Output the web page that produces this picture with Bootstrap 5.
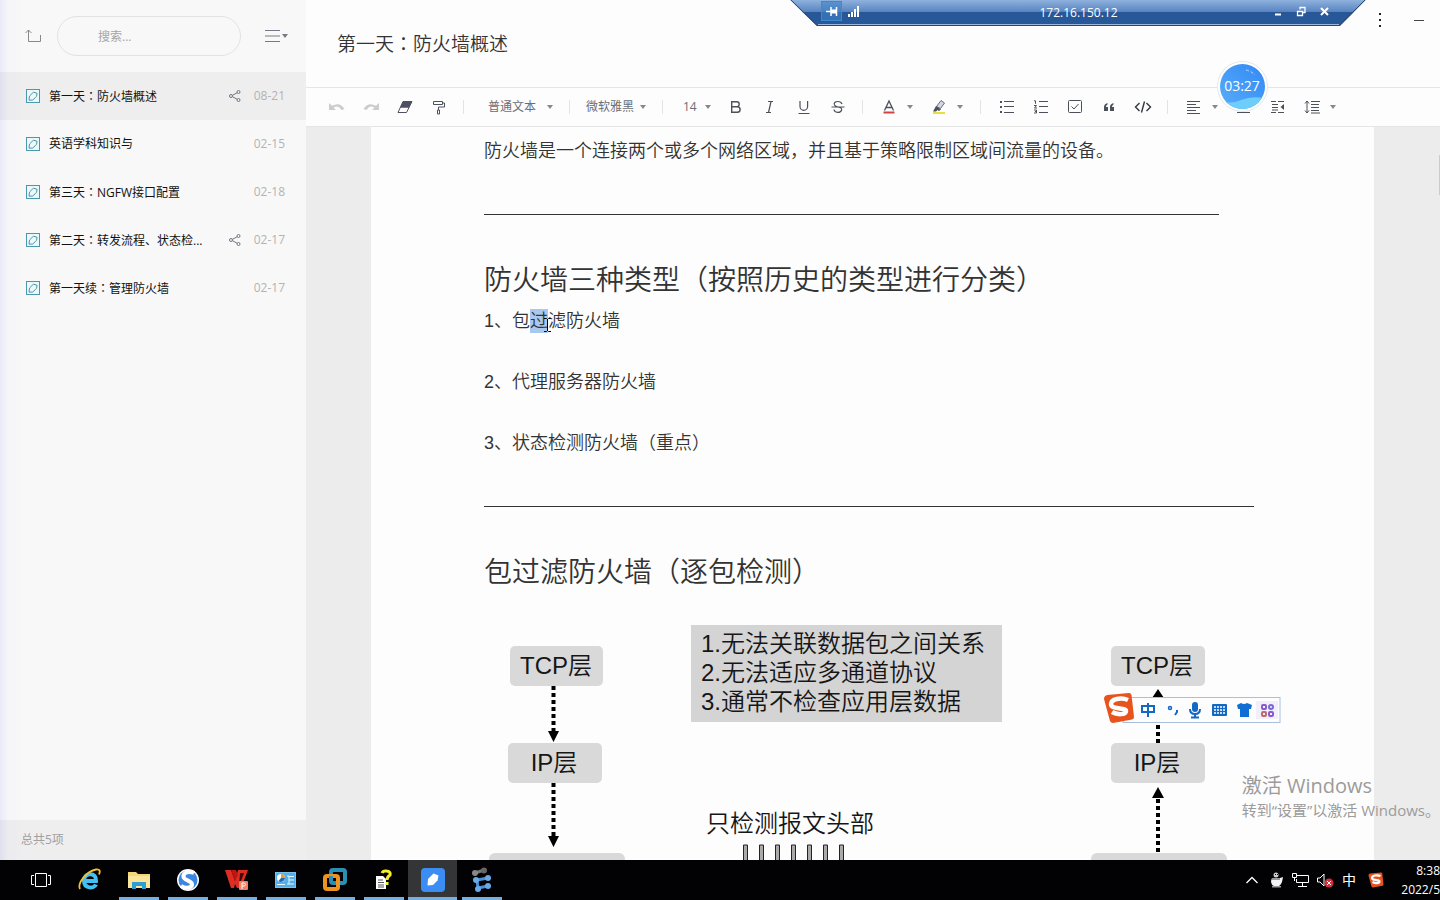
<!DOCTYPE html>
<html lang="zh-CN">
<head>
<meta charset="utf-8">
<meta name="viewport" content="width=device-width, initial-scale=1">
<title>第一天：防火墙概述</title>
<link href="https://cdn.jsdelivr.net/npm/bootstrap@5.3.0/dist/css/bootstrap.min.css" rel="stylesheet">
<style>
  body { font-family: "Open Sans", "Noto Sans CJK SC", sans-serif; font-size: 12px; color: #333; background: #fdfdfd; }
  button { padding: 0; border: 0; background: none; color: inherit; display: flex; align-items: center; justify-content: center; }
  svg { display: block; flex: none; }
  .mid-colon { font-family: "Noto Sans CJK TC", sans-serif; }

  /* note list */
  .notes { width: 306px; background: linear-gradient(90deg, #e9eaf7 0, #f5f5fa 8px, #f8f8f8 24px); }
  .notes-head { height: 72px; padding: 0 18px 0 25px; }
  .search-box { width: 184px; height: 40px; margin-left: 16px; padding: 0 40px; border: 1px solid #e2e2e2; border-radius: 20px; background: transparent; font-size: 12px; color: #999; outline: 0; }
  .search-box::placeholder { color: #a5a5a5; }
  .note-row { height: 48px; padding: 0 21px 0 26px; color: #111; text-decoration: none; }
  .note-row.current { background: rgba(0,0,0,.04); }
  .note-name { margin-left: 9px; width: 156px; }
  .note-date { width: 33px; margin-left: 11px; color: #b3b3b3; text-align: right; }
  .notes-foot { height: 40px; padding-left: 21px; background: rgba(0,0,0,.04); color: #a0a0a0; }

  /* editor */
  .title-bar { height: 87px; padding: 0 15px 0 31px; }
  .title-bar h1 { font-size: 19px; line-height: 30px; font-weight: 350; }
  .tools { height: 40px; padding-left: 14px; border-top: 1px solid #e6e6e6; border-bottom: 1px solid #e6e6e6; color: #4c505a; }
  .tool { width: 34px; height: 30px; }
  .tool-arrow { width: 8px; height: 30px; }
  .rule-v { width: 1px; height: 14px; background: #e4e4e4; margin: 0 9px 0 7px; }
  .pick { appearance: none; border: 0; padding: 0; font-size: 12px; line-height: 20px; color: #6a6d75; outline: 0;
    background: url("data:image/svg+xml,%3Csvg xmlns='http://www.w3.org/2000/svg' width='6' height='4'%3E%3Cpath d='M0 0h6L3 4z' fill='%23888'/%3E%3C/svg%3E") no-repeat right center; }
  .pick-style { width: 65px; } .pick-font { width: 60px; } .pick-size { width: 28px; }
  .desk { background: #ececec; padding: 0 66px 0 65px; }
  .sheet { background: #fdfdfd; padding: 8px 80px 0 113px; height: 100%; overflow: hidden; font-weight: 350; font-family: "Liberation Sans", "Noto Sans CJK SC", sans-serif; }
  .sheet p { font-size: 18px; line-height: 32px; margin: 0 0 29px; }
  .sheet p:last-of-type, .sheet p.intro { margin-bottom: 47px; }
  .sheet h2 { font-size: 28px; line-height: 40px; font-weight: 350; margin: 46px 0 4px; white-space: nowrap; }
  .sheet hr { margin: 0; border: 0; height: 1px; background: #333; opacity: 1; }
  .line-a { width: 735px; } .line-b { width: 770px; }
  .picked { background: #a9c8f0; padding: 2px 0; }
  .diagram { margin-top: 21px; }

  /* floating items */
  .remote { top: 0; right: 73px; width: 577px; height: 27px; color: #fff; }
  .remote-text { top: 0; left: 0; height: 25px; }
  .timer { top: 61px; right: 172px; width: 51px; height: 51px; }
  .ime { top: 692px; right: 159px; }
  .mark-win { right: 0; bottom: 80px; color: #9b9b9b; white-space: nowrap; }
  .mark-win .big { font-size: 20px; line-height: 28px; }
  .mark-win .sub { font-size: 15px; line-height: 20px; }
  .cursor-i { left: -4px; top: 7px; }
  .thumb { right: 0; top: 155px; width: 1px; height: 40px; background: #ccc; }

  /* taskbar */
  .taskbar { height: 40px; padding-left: 16px; background: #020204; color: #fff; }
  .app { width: 49px; height: 40px; position: relative; }
  .app.open::after { content: ""; position: absolute; left: 5px; right: 4px; bottom: 0; height: 3px; background: #76b0e0; }
  .app.active { background: #333537; }
  .app.active::after { left: 0; right: 0; }
  .clock { width: 40px; line-height: 19px; font-size: 12px; }
  .lang { font-size: 14px; line-height: 16px; width: 14px; }
</style>
</head>
<body>
<svg width="0" height="0" class="position-absolute" aria-hidden="true">
  <defs>
    <symbol id="note" viewBox="0 0 14 14"><rect x=".5" y=".5" width="13" height="13" fill="#edf8fb" stroke="#4a97ae"/><path d="M3 11.2 3.5 7 7.4 3.2 11 4.2 10.6 7.3 6.8 11z" fill="none" stroke="#4a97ae"/></symbol>
    <symbol id="share" viewBox="0 0 12 12"><g fill="none" stroke="#70757f"><circle cx="2" cy="6" r="1.5"/><circle cx="9.5" cy="2" r="1.5"/><circle cx="9.5" cy="10" r="1.5"/><path d="M3.4 5.3 8.1 2.8M3.4 6.7 8.1 9.2"/></g></symbol>
    <symbol id="arrow" viewBox="0 0 6 4"><path d="M0 0h6L3 4z" fill="#888"/></symbol>
    <symbol id="sogou" viewBox="0 0 32 32"><path d="M4 3 26 1q2 0 2.500 2L31 25q0 2-2 2.500L10 31q-2 0-3-2L1 7q0-3 3-4z" fill="#e7521d"/><path d="M25 8C18 5 8 7 8 12c0 6 15 3 15 7 0 4-9 4-14 1" fill="none" stroke="#fff" stroke-width="4.500"/></symbol>
  </defs>
</svg>

<div class="d-flex flex-column vh-100 overflow-hidden position-relative">
  <div class="d-flex flex-grow-1 overflow-hidden">
    <aside class="notes d-flex flex-column flex-shrink-0">
      <div class="notes-head d-flex align-items-center">
        <button type="button" aria-label="返回上级"><svg width="16" height="14" fill="none" stroke="#888" ><path d="M3.500 1V12.500H15.500V6M.5 4 3.500 1 6.500 4"/></svg></button>
        <input class="search-box" type="text" placeholder="搜索..." aria-label="搜索">
        <button type="button" class="ms-auto" aria-label="排序"><svg width="23" height="14"><path d="M0 1.500H15M0 7H15M0 12.500H15" stroke="#777a85"/><path d="M17 5h6l-3 4z" fill="#777a85"/></svg></button>
      </div>
      <nav class="flex-grow-1">
        <a href="#" class="note-row current d-flex align-items-center"><svg width="14" height="14"><use href="#note"/></svg><span class="note-name">第一天<span class="mid-colon" lang="zh-TW">：</span>防火墙概述</span><svg class="ms-auto" width="12" height="12"><use href="#share"/></svg><span class="note-date">08-21</span></a>
        <a href="#" class="note-row d-flex align-items-center"><svg width="14" height="14"><use href="#note"/></svg><span class="note-name">英语学科知识与</span><span class="note-date ms-auto">02-15</span></a>
        <a href="#" class="note-row d-flex align-items-center"><svg width="14" height="14"><use href="#note"/></svg><span class="note-name">第三天<span class="mid-colon" lang="zh-TW">：</span>NGFW接口配置</span><span class="note-date ms-auto">02-18</span></a>
        <a href="#" class="note-row d-flex align-items-center"><svg width="14" height="14"><use href="#note"/></svg><span class="note-name">第二天<span class="mid-colon" lang="zh-TW">：</span>转发流程、状态检...</span><svg class="ms-auto" width="12" height="12"><use href="#share"/></svg><span class="note-date">02-17</span></a>
        <a href="#" class="note-row d-flex align-items-center"><svg width="14" height="14"><use href="#note"/></svg><span class="note-name">第一天续<span class="mid-colon" lang="zh-TW">：</span>管理防火墙</span><span class="note-date ms-auto">02-17</span></a>
      </nav>
      <div class="notes-foot d-flex align-items-center">总共5项</div>
    </aside>

    <main class="d-flex flex-column flex-grow-1 overflow-hidden">
      <header class="title-bar d-flex align-items-center flex-shrink-0">
        <h1 class="mb-0">第一天<span class="mid-colon" lang="zh-TW">：</span>防火墙概述</h1>
        <div class="ms-auto d-flex align-self-start pt-2 mt-1">
          <button type="button" aria-label="更多" class="me-4"><svg width="16" height="16" fill="#222"><path d="M6 1h2v2H6zM6 7h2v2H6zM6 13h2v2H6z"/></svg></button>
          <button type="button" aria-label="最小化"><svg width="12" height="16"><path d="M1 8.500H11" stroke="#444"/></svg></button>
        </div>
      </header>

      <div class="tools d-flex align-items-center flex-shrink-0">
        <button type="button" class="tool" aria-label="撤销"><svg width="16" height="12"><path d="M0 2v7h7L4.600 6.800Q9 3.500 12.500 9L15.500 8Q11 .5 3 4.800z" fill="#ccc"/></svg></button>
        <button type="button" class="tool" aria-label="重做"><svg width="16" height="12"><path d="M16 2v7H9l2.400-2.200Q7 3.500 3.500 9L.5 8Q5 .5 13 4.800z" fill="#ccc"/></svg></button>
        <button type="button" class="tool" aria-label="清除格式"><svg width="16" height="14"><path d="M6 1.500h9L9.500 12.500H1z" fill="none" stroke="#4c5060"/><path d="M6 1.500h9L12 7.800H3z" fill="#4c5060"/></svg></button>
        <button type="button" class="tool" aria-label="格式刷"><svg width="14" height="15" fill="none" stroke="#4c5060"><path d="M1.500 1.500h9v3h-9zM10.500 3h2v4h-6v3M5.500 10h2v4h-2z"/></svg></button>
        <span class="rule-v me-0"></span>
        <select class="pick pick-style ms-4" aria-label="段落样式"><option>普通文本</option></select>
        <span class="rule-v ms-3 me-3"></span>
        <select class="pick pick-font" aria-label="字体"><option>微软雅黑</option></select>
        <span class="rule-v ms-3 me-3"></span>
        <select class="pick pick-size ms-1" aria-label="字号"><option>14</option></select>
        <button type="button" class="tool ms-2" aria-label="加粗"><svg width="14" height="14" fill="none" stroke="#4c505a" stroke-width="1.400"><path d="M2.700 1.700h5a2.500 2.500 0 0 1 0 5h-5h5.600a2.800 2.800 0 0 1 0 5.600H2.700z"/></svg></button>
        <button type="button" class="tool" aria-label="斜体"><svg width="12" height="14" fill="none" stroke="#4c505a" stroke-width="1.200"><path d="M4 1.500h5M2 12.500h5M7 1.500 4.500 12.500"/></svg></button>
        <button type="button" class="tool" aria-label="下划线"><svg width="14" height="16" fill="none" stroke="#4c505a" stroke-width="1.200"><path d="M3 2v5.500a3.800 3.800 0 0 0 7.600 0V2M1.500 14.500h11"/></svg></button>
        <button type="button" class="tool" aria-label="删除线"><svg width="14" height="14" fill="none" stroke="#4c505a" stroke-width="1.200"><path d="M11 4Q10 1.500 7 1.500C4 1.500 2.500 3 3.500 5Q4.500 6.500 7 7C10 7.600 11 8.500 10.600 10 9.500 13.500 3.500 13 3 9.500M.5 7h13"/></svg></button>
        <span class="rule-v"></span>
        <button type="button" class="tool" aria-label="文字颜色"><svg width="14" height="16"><path d="M2.500 11.500 7 2l4.500 9.500M4 8.500h6" fill="none" stroke="#4c505a" stroke-width="1.300"/><path d="M1.500 12.500h11v2h-11z" fill="#d0433e"/></svg></button>
        <button type="button" class="tool-arrow" aria-label="选择文字颜色"><svg width="6" height="4"><use href="#arrow"/></svg></button>
        <button type="button" class="tool ms-2" aria-label="背景高亮"><svg width="14" height="16"><path d="M4.500 7.500 9 1.500 12.500 4 8.500 9.500z" fill="#d3d7e4" stroke="#6a6e7a"/><path d="M4 7 9 10.500 7 12 5.500 11 4 12.500H1z" fill="#4c505a"/><path d="M1 13h12v2H1z" fill="#e8de3c"/></svg></button>
        <button type="button" class="tool-arrow" aria-label="选择高亮颜色"><svg width="6" height="4"><use href="#arrow"/></svg></button>
        <span class="rule-v ms-3"></span>
        <button type="button" class="tool" aria-label="无序列表"><svg width="14" height="14"><path d="M4 1.500h10M4 6.500h10M4 12.500h10" stroke="#4c505a"/><path d="M0 1h2v2H0zM0 6h2v2H0zM0 11h2v2H0z" fill="#4c505a"/></svg></button>
        <button type="button" class="tool" aria-label="有序列表"><svg width="14" height="14" fill="none" stroke="#4c505a"><path d="M5 1.500h9M5 6.500h9M5 12.500h9M0 .8h1.500v3M0 5.500h2.500L.5 8H3M0 10h2.500v3H0M1 11.500h1.500"/></svg></button>
        <button type="button" class="tool" aria-label="待办"><svg width="14" height="14" fill="none" stroke="#4c505a"><rect x=".5" y=".5" width="13" height="12" rx="1"/><path d="M3.500 6.500 6 9l4.500-5"/></svg></button>
        <button type="button" class="tool" aria-label="引用"><svg width="12" height="14" fill="#4c505a"><path d="M1 11V7q0-3 3.500-4v1.500Q3 5 3 7h2v4zM7 11V7q0-3 3.500-4v1.500Q9 5 9 7h2v4z"/></svg></button>
        <button type="button" class="tool" aria-label="代码"><svg width="18" height="14" fill="none" stroke="#33363e" stroke-width="1.400"><path d="M5.500 3 1.500 7l4 4M12.500 3l4 4-4 4M10.500 1.500 7.500 12.500"/></svg></button>
        <span class="rule-v"></span>
        <button type="button" class="tool" aria-label="对齐"><svg width="14" height="14" stroke="#4c505a"><path d="M0 1.500h13M0 4.500h9M0 7.500h13M0 10.500h9M0 13.500h13"/></svg></button>
        <button type="button" class="tool-arrow" aria-label="选择对齐方式"><svg width="6" height="4"><use href="#arrow"/></svg></button>
        <button type="button" class="tool ms-2" aria-label="增加缩进"><svg width="14" height="14" stroke="#4c505a"><path d="M0 1.500h13M0 4.500h7M0 7.500h7M0 10.500h7M0 12.500h13"/></svg></button>
        <button type="button" class="tool" aria-label="减少缩进"><svg width="14" height="14" stroke="#4c505a"><path d="M0 1.500h5M7 1.500h6M1 4.500h6M1 7.500h6M1 10h6M0 12.500h5M7 12.500h6"/><path d="M13 4v6L9.500 7z" fill="#4c505a" stroke="none"/></svg></button>
        <button type="button" class="tool" aria-label="行高"><svg width="16" height="14" fill="none" stroke="#4c505a"><path d="M7 1.500h9M7 4.500h8M7 7.500h8M7 10.500h8M7 13h9M3 1v12M1 3.500 3 1l2 2.500M1 10.500 3 13l2-2.500"/></svg></button>
        <button type="button" class="tool-arrow" aria-label="选择行高"><svg width="6" height="4"><use href="#arrow"/></svg></button>
      </div>

      <div class="desk flex-grow-1 overflow-hidden">
        <article class="sheet">
          <p class="intro text-nowrap">防火墙是一个连接两个或多个网络区域，并且基于策略限制区域间流量的设备。</p>
          <hr class="line-a">
          <h2>防火墙三种类型（按照历史的类型进行分类）</h2>
          <p>1、包<span class="picked">过</span><span class="position-relative">滤<svg class="cursor-i position-absolute" width="7" height="14" fill="none" stroke="#000"><path d="M0 .5h2.500l1 1 1-1H7M3.500 1v12M0 13.500h2.500l1-1 1 1H7"/></svg></span>防火墙</p>
          <p>2、代理服务器防火墙</p>
          <p>3、状态检测防火墙（重点）</p>
          <hr class="line-b">
          <h2>包过滤防火墙（逐包检测）</h2>
          <svg class="diagram" width="760" height="260" font-size="24" fill="#161616" role="img" aria-label="包过滤防火墙示意图">
            <g fill="#d9d9d9">
              <rect x="26" y="32" width="93" height="40" rx="5"/><rect x="24" y="129" width="94" height="40" rx="5"/><rect x="5" y="239" width="136" height="40" rx="6"/>
              <rect x="627" y="32" width="94" height="40" rx="5"/><rect x="627" y="129" width="94" height="40" rx="5"/><rect x="607" y="239" width="136" height="40" rx="6"/>
              <rect x="207" y="11" width="311" height="97" fill="#d4d4d4"/>
            </g>
            <g stroke="#000" stroke-width="4" stroke-dasharray="4 3"><path d="M69.500 72V118M69.500 169V224M674 90V129M674 185V238"/></g>
            <path d="M64 117h11l-5.500 11zM64 222h11l-5.500 11zM668 184h12l-6-11zM668 84h12l-6-9z" fill="#000"/>
            <g text-anchor="middle"><text x="72" y="60">TCP层</text><text x="70" y="157">IP层</text><text x="673" y="60">TCP层</text><text x="673" y="157">IP层</text><text x="306" y="218">只检测报文头部</text></g>
            <text x="217" y="38">1.无法关联数据包之间关系</text><text x="217" y="67">2.无法适应多通道协议</text><text x="217" y="96">3.通常不检查应用层数据</text>
            <g fill="#aaa" stroke="#222"><path d="M259.500 260V231h4V260M275.500 260V231h4V260M291.500 260V231h4V260M307.500 260V231h4V260M323.500 260V231h4V260M339.500 260V231h4V260M355.500 260V231h4V260"/></g>
          </svg>
        </article>
      </div>
    </main>
  </div>

  <footer class="taskbar d-flex flex-shrink-0">
    <button type="button" class="app" aria-label="任务视图"><svg width="20" height="14" fill="none" stroke="#fff"><path d="M4.500.5h11v13h-11zM3 2.500H.5v9H3M17 2.500h2.500v9H17"/></svg></button>
    <button type="button" class="app" aria-label="Internet Explorer"><svg width="24" height="24" fill="none"><path d="M5 13H18C19 4 6 4 6 12.500 6 21 16 21 18 16.500" stroke="#45c0f2" stroke-width="4"/><path d="M2 21C-1 15 9 3 18 1.500 22 1 22.500 3 21 6.500" stroke="#f1c232" stroke-width="1.800"/></svg></button>
    <button type="button" class="app open" aria-label="文件资源管理器"><svg width="22" height="20"><path d="M0 2h8l2 2h12v14H0z" fill="#f6d775"/><path d="M0 6h22v12H0z" fill="#fbe59a"/><path d="M4 19v-7h14v7h-4v-3H8v3z" fill="#2f9fd0"/></svg></button>
    <button type="button" class="app open" aria-label="搜狗浏览器"><svg width="24" height="24"><circle cx="12" cy="12" r="11" fill="#fff"/><circle cx="12" cy="12" r="9.500" fill="#3a86e0"/><path d="M18 5C11 2 6 6 8 10c2 3 9 3 8 7-1 3-6 4-11 1" fill="none" stroke="#fff" stroke-width="4"/></svg></button>
    <button type="button" class="app open" aria-label="WPS"><svg width="26" height="22"><path d="M1 1h6l4 11 3-11h10l-7 18h-4l-2-4-1 4H7z" fill="#e02d24"/><path d="M16 4h4l-5 13z" fill="#3a0806"/><path d="M7 1h5l2 5-3 6z" fill="#b91812"/><rect x="15" y="12" width="9" height="9" rx="1" fill="#f08264"/><path d="M18 20v-6h2.500q2 1.500 0 3H18" fill="none" stroke="#fff"/></svg></button>
    <button type="button" class="app open" aria-label="控制面板"><svg width="21" height="16"><rect width="21" height="16" fill="#74c4f2"/><rect x="1" y="1" width="19" height="14" fill="#56aee6"/><circle cx="6" cy="6" r="4" fill="#fff"/><path d="M6 6V2a4 4 0 0 1 4 4z" fill="#e0a030"/><path d="M6 6h4a4 4 0 0 1-6.500 3z" fill="#2368b8"/><path d="M12 4h2v8h-2M14 4.500h5M14 8h5M14 12h5M2 12.500h8" stroke="#e8f7ff" fill="none"/></svg></button>
    <button type="button" class="app open" aria-label="VMware"><svg width="26" height="26" fill="none" stroke-width="4"><rect x="9" y="3" width="14" height="13" rx="2" stroke="#2b8fb3"/><rect x="3" y="9" width="13" height="13" rx="2" stroke="#ee9322"/><path d="M9 9v5" stroke="#2b8fb3"/></svg></button>
    <button type="button" class="app open" aria-label="帮助"><svg width="18" height="22"><path d="M1 7h7l3 3v10H1z" fill="#fff"/><path d="M3 11h5M3 13.500h6M3 16h6M3 18h6" stroke="#555"/><path d="M7 4Q8 1.500 11.500 2 16 2.500 15 6q-3 2-3 5" fill="none" stroke="#f4ee2c" stroke-width="3"/><path d="M10.500 13h3v3h-3z" fill="#f4ee2c"/></svg></button>
    <button type="button" class="app open active" aria-label="有道云笔记"><svg width="24" height="24"><rect width="24" height="24" rx="4" fill="#3c8df3"/><path d="M6.500 17.500 7 11l5.500-5.500 5 2-1 5L12 17z" fill="#fff"/></svg></button>
    <button type="button" class="app open" aria-label="eNSP"><svg width="22" height="26"><g stroke="#777" stroke-width="3"><path d="M4 6 13 3"/></g><circle cx="4" cy="6" r="3" fill="#888"/><circle cx="13" cy="3.500" r="3" fill="#666"/><path d="M17 11 6 13 7 21 17 19" fill="none" stroke="#4a8fd8" stroke-width="3"/><g fill="#68a9e8"><circle cx="17" cy="11" r="3"/><circle cx="5" cy="13" r="3"/><circle cx="7" cy="22" r="3"/><circle cx="17" cy="19" r="3"/></g></svg></button>

    <div class="ms-auto d-flex align-items-center">
      <button type="button" aria-label="显示隐藏的图标"><svg width="12" height="8" fill="none" stroke="#fff" stroke-width="1.300"><path d="M.5 7 6 1.500 11.500 7"/></svg></button>
      <button type="button" class="ms-2 ps-1" aria-label="QQ"><svg width="14" height="16"><circle cx="6" cy="3" r="2.500" fill="#ccc"/><path d="M2 6h8l3-1-1 5q-2 5-6 4.500Q1 14 1 9z" fill="#f4f4f4"/><path d="M2 6h8v2H2zM2 14h9v1.500H2z" fill="#999"/><path d="M5 2.500h1M7 2.500h1" stroke="#000"/></svg></button>
      <button type="button" class="ms-2" aria-label="网络"><svg width="17" height="14" fill="none" stroke="#fff"><path d="M5 2.500h11.500v7H4.500V6M.5.5h4v4h-4zM2.500 5v3M10.500 10v3M6 13.500h9"/></svg></button>
      <button type="button" class="ms-2" aria-label="静音"><svg width="17" height="15"><path d="M.5 5h2.500l4-4v12L3 9H.5z" fill="none" stroke="#fff"/><circle cx="12" cy="10" r="4.500" fill="#d02f3b"/><path d="M10 8l4 4M14 8l-4 4" stroke="#fff"/></svg></button>
      <button type="button" class="ms-2" aria-label="输入法"><span class="lang">中</span></button>
      <button type="button" class="ms-2 ps-1" aria-label="搜狗输入法"><svg width="16" height="16"><use href="#sogou"/></svg></button>
      <div class="clock ms-3 text-end text-nowrap"><div>8:38</div><div>2022/5</div></div>
    </div>
  </footer>

  <div class="remote position-absolute">
    <svg width="577" height="27">
      <defs><linearGradient id="rg" x1="0" y1="0" x2="0" y2="1"><stop offset="0" stop-color="#8fb1de"/><stop offset=".46" stop-color="#5784bf"/><stop offset=".47" stop-color="#285797"/><stop offset="1" stop-color="#27599a"/></linearGradient></defs>
      <path d="M0 0H576L550 26H27z" fill="url(#rg)"/><path d="M1 0 27 25.500H549.500L575 0" fill="none" stroke="#27466f"/><path d="M28 24.500H549" stroke="#9db8da"/>
      <rect x="31.500" y="1.500" width="20" height="19" fill="#3e80c4" fill-opacity=".6" stroke="#3c8bcf"/>
      <path d="M36 11.500h5M41 7v9M41 11.500h6M46.500 7v9" stroke="#fff" stroke-width="1.500"/><path d="M41 9.500h6v4h-6z" fill="#fff"/>
      <path d="M59 14v3M62 12v5M65 9v8M68 6v11" stroke="#fff" stroke-width="2"/>
      <path d="M485 14.500h6" stroke="#fff" stroke-width="2"/>
      <path d="M507.500 11.500h5v4h-5zM510 9.500V7.500h5v5h-2" fill="none" stroke="#fff" stroke-width="1.300"/>
      <path d="M531 8l7 7M538 8l-7 7" stroke="#fff" stroke-width="2"/>
    </svg>
    <div class="remote-text position-absolute w-100 d-flex align-items-center justify-content-center">172.16.150.12</div>
  </div>

  <div class="timer position-absolute">
    <svg width="51" height="51"><defs><linearGradient id="tg" x1="1" y1="0" x2="0" y2="1"><stop offset="0" stop-color="#2f86f6"/><stop offset="1" stop-color="#5bb0f8"/></linearGradient><clipPath id="tc"><circle cx="25.500" cy="25.500" r="22.500"/></clipPath></defs>
      <circle cx="25.500" cy="25.500" r="25" fill="#fff" stroke="#dfe8ef"/><g clip-path="url(#tc)"><rect width="51" height="51" fill="url(#tg)"/><path d="M0 39Q12 44 24 39T51 38V51H0z" fill="#6dcdfb"/></g><path d="M29 9q5 1 9 5" fill="none" stroke="#b8dcff" stroke-dasharray="3 2"/>
      <text x="25" y="30" text-anchor="middle" font-size="14" fill="#fff">03:27</text></svg>
  </div>

  <div class="ime position-absolute" role="toolbar" aria-label="搜狗输入法">
    <svg width="178" height="32">
      <rect x="20" y="5.500" width="157" height="25" fill="#fdfdfe" stroke="#a9c0dc"/>
      <svg width="32" height="32" viewBox="0 0 32 32"><use href="#sogou" width="32" height="32"/></svg>
      <g fill="none" stroke="#1268c3" stroke-width="2"><path d="M39 14h12v6H39zM45 11v14"/><circle cx="67" cy="16" r="1.500" stroke-width="1.500"/><path d="M74 18v2l-2 3"/><path d="M87 17q0 5 5 5t5-5M92 22v4M88 25.500h8"/></g>
      <rect x="89" y="10" width="6" height="10" rx="3" fill="#1268c3"/>
      <rect x="109" y="12" width="15" height="12" rx="1" fill="#1268c3"/><path d="M111 15h11M111 18h11M111 21h11" stroke="#fff" stroke-width="1.500" stroke-dasharray="2 1"/>
      <path d="M134 13 138 11q3 2 6 0l5 2-1 4h-2v8h-9v-8h-2z" fill="#0f6fd2"/>
      <rect x="153" y="9" width="22" height="18" fill="#f1f0fa"/><g fill="none" stroke-width="2"><rect x="159" y="13" width="4" height="4" rx="1" stroke="#8a5bd0"/><circle cx="168" cy="15" r="2" stroke="#7b67d8"/><rect x="159" y="20" width="4" height="4" rx="1" stroke="#c06a70"/><rect x="166" y="20" width="4" height="4" rx="1" stroke="#8a5bd0"/></g>
    </svg>
  </div>

  <div class="mark-win position-absolute"><div class="big">激活 Windows</div><div class="sub">转到“设置”以激活 Windows。</div></div>
  <div class="thumb position-absolute"></div>
</div>
<script src="https://cdn.jsdelivr.net/npm/bootstrap@5.3.0/dist/js/bootstrap.bundle.min.js"></script>
</body>
</html>
